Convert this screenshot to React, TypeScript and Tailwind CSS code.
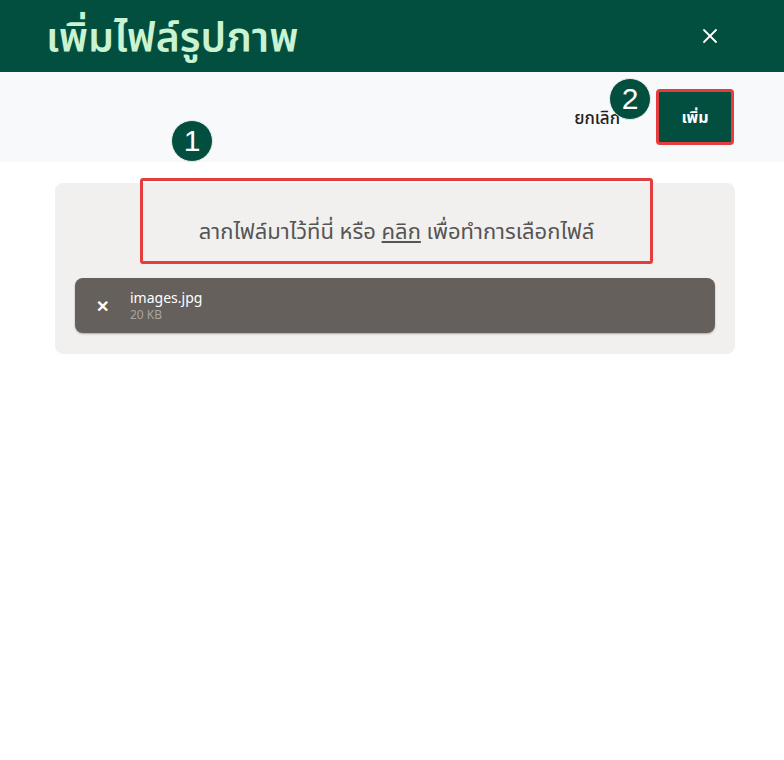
import { X } from 'lucide-react';

function Badge({ n }: { n: number }) {
  return (
    <div className="absolute w-[42px] h-[42px] rounded-full bg-[#024f40] text-white flex items-center justify-center text-[30px] leading-none font-['Liberation_Sans',sans-serif] border border-[#e8eceb]">
      {n}
    </div>
  );
}

export default function App() {
  return (
    <div className="w-[784px] h-[760px] bg-white font-['Noto_Sans','Noto_Sans_Thai',sans-serif]">
      {/* Header */}
      <div className="h-[72px] bg-[#024f40] flex items-center justify-between pl-[46px] pr-[62px]">
        <h1 className="text-[#c9f3d1] text-[41px] font-semibold leading-none">
          เพิ่มไฟล์รูปภาพ
        </h1>
        <X className="w-[24px] h-[24px] text-white" strokeWidth={1.8} />
      </div>

      {/* Toolbar */}
      <div className="h-[90px] bg-[#f8f9fa] relative flex items-center justify-end pr-[50px] gap-[36px]">
        <span className="text-[17px] text-[#222] font-medium mt-[2px]">ยกเลิก</span>
        <button className="w-[78px] h-[56px] bg-[#024f40] text-white text-[16px] font-bold rounded-[4px] border-[3px] border-[#e53d3d]">
          เพิ่ม
        </button>
        <div className="absolute left-[609px] top-[6px]">
          <div className="relative">
            <Badge n={2} />
          </div>
        </div>
        <div className="absolute left-[171px] top-[48px]">
          <div className="relative">
            <Badge n={1} />
          </div>
        </div>
      </div>

      {/* Body */}
      <div className="pl-[55px] pt-[21px]">
        <div className="w-[680px] bg-[#f1f0ee] rounded-[8px] pb-[21px] flex flex-col">
          <div className="ml-[85px] mr-[82px] -mt-[5px] h-[86px] border-[3px] border-[#e53d3d] rounded-[3px] flex items-end justify-center pb-[14px]">
            <span className="text-[22px] text-[#555]">
              ลากไฟล์มาไว้ที่นี่ หรือ <span className="underline">คลิก</span> เพื่อทำการเลือกไฟล์
            </span>
          </div>
          <div className="mx-[20px] mt-[14px] h-[55px] bg-[#65605b] rounded-[8px] shadow-[0_1px_2px_rgba(0,0,0,0.3)] flex items-center">
            <span className="w-[55px] text-center text-white text-[16px] font-bold">✕</span>
            <div className="flex flex-col leading-tight">
              <span className="text-white text-[14px]">images.jpg</span>
              <span className="text-[#a9a59f] text-[12px]">20 KB</span>
            </div>
          </div>
        </div>
      </div>
    </div>
  );
}
